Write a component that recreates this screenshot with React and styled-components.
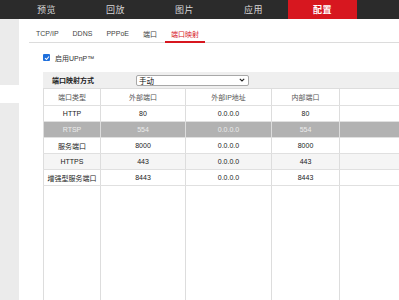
import React from "react";
import styled, { createGlobalStyle } from "styled-components";

const GlobalStyle = createGlobalStyle`
  html, body { margin: 0; padding: 0; background: #fff; }
  body { font-family: "Liberation Sans", "Noto Sans CJK SC", sans-serif; }
  * { box-sizing: border-box; }
`;

const Page = styled.div`
  width: 399px;
  height: 300px;
  overflow: hidden;
  display: flex;
  flex-direction: column;
`;

const TopNav = styled.div`
  height: 19px;
  flex: none;
  background: #2b2b2b;
  display: flex;
  padding-left: 12px;
`;

const NavItem = styled.div`
  width: 69px;
  height: 19px;
  display: flex;
  align-items: center;
  justify-content: center;
  font-size: 9px;
  letter-spacing: 0.5px;
  color: ${(p) => (p.$active ? "#ffffff" : "#d8d8d8")};
  background: ${(p) => (p.$active ? "#d7171f" : "transparent")};
  font-weight: ${(p) => (p.$active ? "bold" : "normal")};
`;

const Main = styled.div`
  flex: 1;
  display: flex;
  min-height: 0;
`;

const Sidebar = styled.div`
  width: 19px;
  flex: none;
  display: flex;
  flex-direction: column;
`;

const SideBlock = styled.div`
  height: ${(p) => p.$h || "auto"};
  flex: ${(p) => (p.$grow ? 1 : "none")};
  background: ${(p) => (p.$selected ? "#ffffff" : "#ebebeb")};
`;

const Content = styled.div`
  flex: 1;
  min-width: 0;
  padding-left: 10px;
  display: flex;
  flex-direction: column;
  overflow: hidden;
`;

const Tabs = styled.div`
  height: 24px;
  flex: none;
  display: flex;
  align-items: flex-end;
  gap: 2px;
  padding-left: 1px;
  border-bottom: 1px solid #dcdcdc;
`;

const Tab = styled.div`
  height: 100%;
  padding: 0 6px;
  display: flex;
  align-items: center;
  padding-top: 6px;
  font-size: 7px;
  color: ${(p) => (p.$active ? "#d7171f" : "#444")};
  border-bottom: 2px solid ${(p) => (p.$active ? "#d7171f" : "transparent")};
  margin-bottom: -1px;
  white-space: nowrap;
`;

const Body = styled.div`
  flex: 1;
  min-height: 0;
  padding-left: 14px;
  display: flex;
  flex-direction: column;
`;

const CheckRow = styled.div`
  height: 29px;
  flex: none;
  display: flex;
  align-items: center;
  gap: 5px;
  padding-top: 0px;
  font-size: 7px;
  color: #333;
`;

const CheckBox = styled.span`
  width: 7px;
  height: 7px;
  border-radius: 1px;
  background: #1e6fdc;
  display: inline-flex;
  align-items: center;
  justify-content: center;
`;

const ConfigRow = styled.div`
  height: 16px;
  flex: none;
  width: 440px;
  background: #efefef;
  display: flex;
  align-items: center;
  font-size: 7px;
  color: #222;
`;

const ConfigLabel = styled.div`
  width: 93px;
  padding-left: 9px;
  font-weight: bold;
`;

const Select = styled.div`
  width: 113px;
  height: 11px;
  background: #fff;
  border: 1px solid #a8a8a8;
  border-radius: 2px;
  display: flex;
  align-items: center;
  justify-content: space-between;
  padding: 0 3px 0 2px;
  font-size: 7.5px;
  color: #111;
`;

const Table = styled.div`
  flex: 1;
  width: 440px;
  display: flex;
  flex-direction: column;
  border-top: 1px solid #dddddd;
`;

const Row = styled.div`
  display: grid;
  grid-template-columns: 57px 85px 86px 68px 144px;
  height: ${(p) => (p.$filler ? "auto" : "16px")};
  flex: ${(p) => (p.$filler ? 1 : "none")};
  background: ${(p) =>
    p.$variant === "selected" ? "#b2b2b2" : p.$variant === "alt" ? "#f5f5f5" : "#ffffff"};
  color: ${(p) =>
    p.$variant === "selected" ? "#ececec" : p.$head ? "#555" : "#222"};
  border-bottom: ${(p) => (p.$filler ? "none" : "1px solid #e0e0e0")};
`;

const Cell = styled.div`
  border-left: 1px solid #dddddd;
  display: flex;
  align-items: center;
  justify-content: center;
  font-size: 7px;
  white-space: nowrap;
  overflow: hidden;
`;

const navItems = ["预览", "回放", "图片", "应用", "配置"];
const tabs = ["TCP/IP", "DDNS", "PPPoE", "端口", "端口映射"];
const rows = [
  { type: "HTTP", ext: "80", ip: "0.0.0.0", inner: "80" },
  { type: "RTSP", ext: "554", ip: "0.0.0.0", inner: "554", variant: "selected" },
  { type: "服务端口", ext: "8000", ip: "0.0.0.0", inner: "8000" },
  { type: "HTTPS", ext: "443", ip: "0.0.0.0", inner: "443", variant: "alt" },
  { type: "增强型服务端口", ext: "8443", ip: "0.0.0.0", inner: "8443" },
];

export default function App() {
  return (
    <>
      <GlobalStyle />
      <Page>
        <TopNav>
          {navItems.map((n) => (
            <NavItem key={n} $active={n === "配置"}>
              {n}
            </NavItem>
          ))}
        </TopNav>
        <Main>
          <Sidebar>
            <SideBlock $h="66px" />
            <SideBlock $h="18px" $selected />
            <SideBlock $grow />
          </Sidebar>
          <Content>
            <Tabs>
              {tabs.map((t) => (
                <Tab key={t} $active={t === "端口映射"}>
                  {t}
                </Tab>
              ))}
            </Tabs>
            <Body>
              <CheckRow>
                <CheckBox>
                  <svg width="6" height="6" viewBox="0 0 6 6">
                    <path d="M1 3.1 L2.5 4.5 L5 1.5" fill="none" stroke="#fff" strokeWidth="1.1" />
                  </svg>
                </CheckBox>
                启用UPnP™
              </CheckRow>
              <ConfigRow>
                <ConfigLabel>端口映射方式</ConfigLabel>
                <Select>
                  <span>手动</span>
                  <svg width="6" height="4" viewBox="0 0 6 4">
                    <path d="M0.8 0.8 L3 3 L5.2 0.8" fill="none" stroke="#222" strokeWidth="1.1" />
                  </svg>
                </Select>
              </ConfigRow>
              <Table>
                <Row $head style={{ height: "17px" }}>
                  <Cell>端口类型</Cell>
                  <Cell>外部端口</Cell>
                  <Cell>外部IP地址</Cell>
                  <Cell>内部端口</Cell>
                  <Cell>状态</Cell>
                </Row>
                {rows.map((r) => (
                  <Row key={r.type} $variant={r.variant}>
                    <Cell>{r.type}</Cell>
                    <Cell>{r.ext}</Cell>
                    <Cell>{r.ip}</Cell>
                    <Cell>{r.inner}</Cell>
                    <Cell>未生效</Cell>
                  </Row>
                ))}
                <Row $filler>
                  <Cell />
                  <Cell />
                  <Cell />
                  <Cell />
                  <Cell />
                </Row>
              </Table>
            </Body>
          </Content>
        </Main>
      </Page>
    </>
  );
}
